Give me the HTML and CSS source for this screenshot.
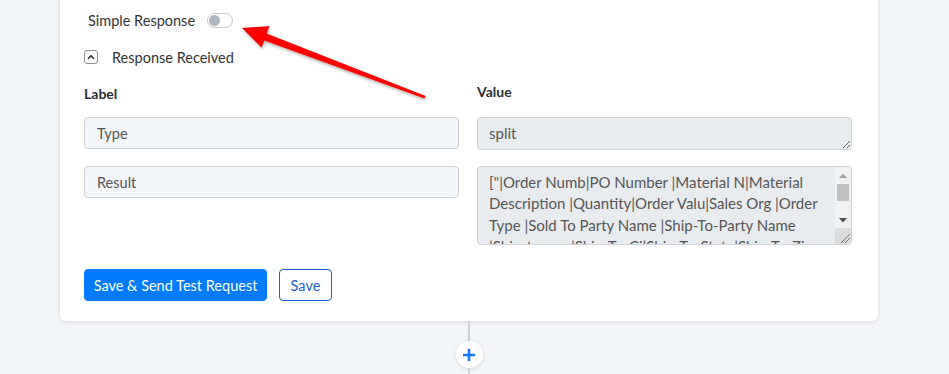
FILE: index.html
```html
<!DOCTYPE html>
<html>
<head>
<meta charset="utf-8">
<link rel="stylesheet" href="styles.css">
</head>
<body>
<div class="page">
  <div class="card">
    <div class="toggle-row">
      <span class="toggle-label">Simple Response</span>
      <span class="switch"><span class="knob"></span></span>
    </div>
    <div class="section-row">
      <span class="chev-box">
        <svg width="8" height="6" viewBox="0 0 8 6"><path d="M1 4.8 L4 1.8 L7 4.8" fill="none" stroke="#222" stroke-width="1.4"/></svg>
      </span>
      <span class="section-label">Response Received</span>
    </div>
    <div class="grid">
      <div class="head head-label">Label</div>
      <div class="head head-value">Value</div>
      <input class="field" type="text" value="Type" readonly>
      <textarea class="area area-small" readonly>split</textarea>
      <input class="field" type="text" value="Result" readonly>
      <div class="area-wrap">
        <textarea class="area area-big" readonly>["|Order Numb|PO Number |Material N|Material Description |Quantity|Order Valu|Sales Org |Order Type |Sold To Party Name |Ship-To-Party Name |Ship‑to‑par |Ship-To-Ci|Ship-To-State|Ship-To-Zip |Created On |Delivery Date |Status"]</textarea>
        <div class="sbar">
          <div class="sbar-btn">
            <svg width="8" height="5" viewBox="0 0 8 5"><path d="M0 5 L4 0.5 L8 5 Z" fill="#a3a3a3"/></svg>
          </div>
          <div class="sbar-track">
            <div class="sbar-thumb"></div>
          </div>
          <div class="sbar-btn">
            <svg width="8" height="5" viewBox="0 0 8 5"><path d="M0 0 L8 0 L4 4.5 Z" fill="#505050"/></svg>
          </div>
          <div class="sbar-corner">
            <svg width="10" height="10" viewBox="0 0 10 10"><path d="M1 10 L10 1 M5 10 L10 5" stroke="#777" stroke-width="1"/></svg>
          </div>
        </div>
      </div>
    </div>
    <div class="actions">
      <button class="btn btn-primary">Save &amp; Send Test Request</button>
      <button class="btn btn-outline">Save</button>
    </div>
  </div>
  <div class="connector">
    <div class="line"></div>
    <div class="plus">
      <svg width="14" height="14" viewBox="0 0 14 14"><path d="M7 1 V13 M1 7 H13" stroke="#1677ff" stroke-width="2.6"/></svg>
    </div>
    <div class="line line-rest"></div>
  </div>
  <svg class="arrow" width="949" height="374" viewBox="0 0 949 374">
    <defs>
      <filter id="sh" x="-10%" y="-10%" width="130%" height="140%">
        <feDropShadow dx="1" dy="2" stdDeviation="1.5" flood-color="#000" flood-opacity="0.3"/>
      </filter>
    </defs>
    <polygon filter="url(#sh)" fill="#ff0000" points="242,28 269.5,26 266.6,33.5 425.6,96 424.4,98.5 264.2,40.5 261.5,47.5"/>
  </svg>
</div>
</body>
</html>
```
FILE: styles.css
```css
html, body {
  margin: 0;
  padding: 0;
}
body {
  background: #f2f5f8;
  font-family: Lato, "Open Sans", sans-serif;
  color: #333;
  width: 949px;
  height: 374px;
  overflow: hidden;
}
.page {
  position: relative;
  width: 949px;
  height: 374px;
  overflow: hidden;
}
.card {
  box-sizing: border-box;
  width: 818px;
  margin: -10px 0 0 60px;
  padding: 10px 26px 20px 24px;
  background: #fff;
  border-radius: 0 0 6px 6px;
  box-shadow: 0 1px 4px rgba(0, 0, 0, 0.12);
  display: flex;
  flex-direction: column;
}
.toggle-row {
  margin-top: 10px;
  height: 20px;
  display: flex;
  align-items: center;
  padding-left: 4px;
  gap: 12px;
}
.toggle-label {
  font-size: 14.5px;
  color: #333;
}
.switch {
  box-sizing: border-box;
  width: 26px;
  height: 15px;
  border: 1px solid #c3c7cc;
  border-radius: 8px;
  display: flex;
  align-items: center;
  padding-left: 1px;
  background: #fff;
}
.knob {
  width: 11px;
  height: 11px;
  border-radius: 50%;
  background: #adb5bd;
}
.section-row {
  margin-top: 17px;
  height: 20px;
  display: flex;
  align-items: center;
  gap: 14px;
}
.chev-box {
  box-sizing: border-box;
  width: 14px;
  height: 14px;
  border: 1px solid #8a9096;
  border-radius: 3px;
  display: flex;
  align-items: center;
  justify-content: center;
}
.section-label {
  font-size: 14.5px;
  color: #333;
}
.grid {
  margin-top: 18px;
  display: grid;
  grid-template-columns: 375px 375px;
  column-gap: 18px;
  row-gap: 16px;
  align-items: start;
}
.head {
  font-size: 14px;
  font-weight: 700;
  color: #2b2f36;
  height: 18px;
  line-height: 18px;
  margin-bottom: -2px;
}
.head-value {
  margin-top: -2px;
}
.field {
  box-sizing: border-box;
  width: 375px;
  height: 32px;
  margin: 0;
  padding: 0 12px;
  border: 1px solid #cfd4da;
  border-radius: 4px;
  background: #f3f6f9;
  font-family: Lato, "Open Sans", sans-serif;
  font-size: 14.5px;
  color: #555;
  outline: none;
}
.area {
  box-sizing: border-box;
  width: 375px;
  margin: 0;
  padding: 5px 11px;
  border: 1px solid #cfd4da;
  border-radius: 4px;
  background: #e9ecef;
  font-family: Lato, "Open Sans", sans-serif;
  font-size: 15px;
  line-height: 21.3px;
  color: #555;
  outline: none;
  resize: vertical;
  display: block;
}
.area-small {
  height: 33px;
  overflow: hidden;
}
.area-wrap {
  position: relative;
  width: 375px;
  height: 79px;
}
.area-big {
  height: 79px;
  overflow: hidden;
  resize: none;
  padding-right: 26px;
}
.sbar {
  position: absolute;
  top: 1px;
  right: 1px;
  bottom: 1px;
  width: 16px;
  display: flex;
  flex-direction: column;
  background: #f1f1f1;
  border-radius: 0 3px 3px 0;
  overflow: hidden;
}
.sbar-btn {
  height: 16px;
  display: flex;
  align-items: center;
  justify-content: center;
  flex: none;
}
.sbar-track {
  height: 28px;
  flex: none;
  padding: 1px 2px 0 2px;
}
.sbar-thumb {
  height: 17px;
  background: #c1c1c1;
}
.sbar-corner {
  flex: 1;
  background: #dcdcdc;
  display: flex;
  align-items: flex-end;
  justify-content: flex-end;
  padding: 0 1px 1px 0;
}
.actions {
  margin-top: 24px;
  display: flex;
  gap: 12px;
}
.btn {
  box-sizing: border-box;
  height: 32px;
  border-radius: 4px;
  font-family: Lato, "Open Sans", sans-serif;
  font-size: 14.5px;
  padding: 0;
  white-space: nowrap;
  cursor: pointer;
}
.btn-primary {
  width: 183px;
  background: #007bff;
  border: 1px solid #007bff;
  color: #fff;
}
.btn-outline {
  width: 53px;
  background: #fff;
  border: 1px solid #1f5fc4;
  color: #1f5fc4;
}
.connector {
  width: 818px;
  margin-left: 60px;
  display: flex;
  flex-direction: column;
  align-items: center;
}
.line {
  width: 2px;
  height: 20px;
  background: #cdd1d6;
}
.line-rest {
  height: 6px;
}
.plus {
  width: 27px;
  height: 27px;
  border-radius: 50%;
  background: #fff;
  box-shadow: 0 1px 4px rgba(0, 0, 0, 0.12);
  display: flex;
  align-items: center;
  justify-content: center;
}
.arrow {
  position: absolute;
  left: 0;
  top: 0;
  pointer-events: none;
}
```
